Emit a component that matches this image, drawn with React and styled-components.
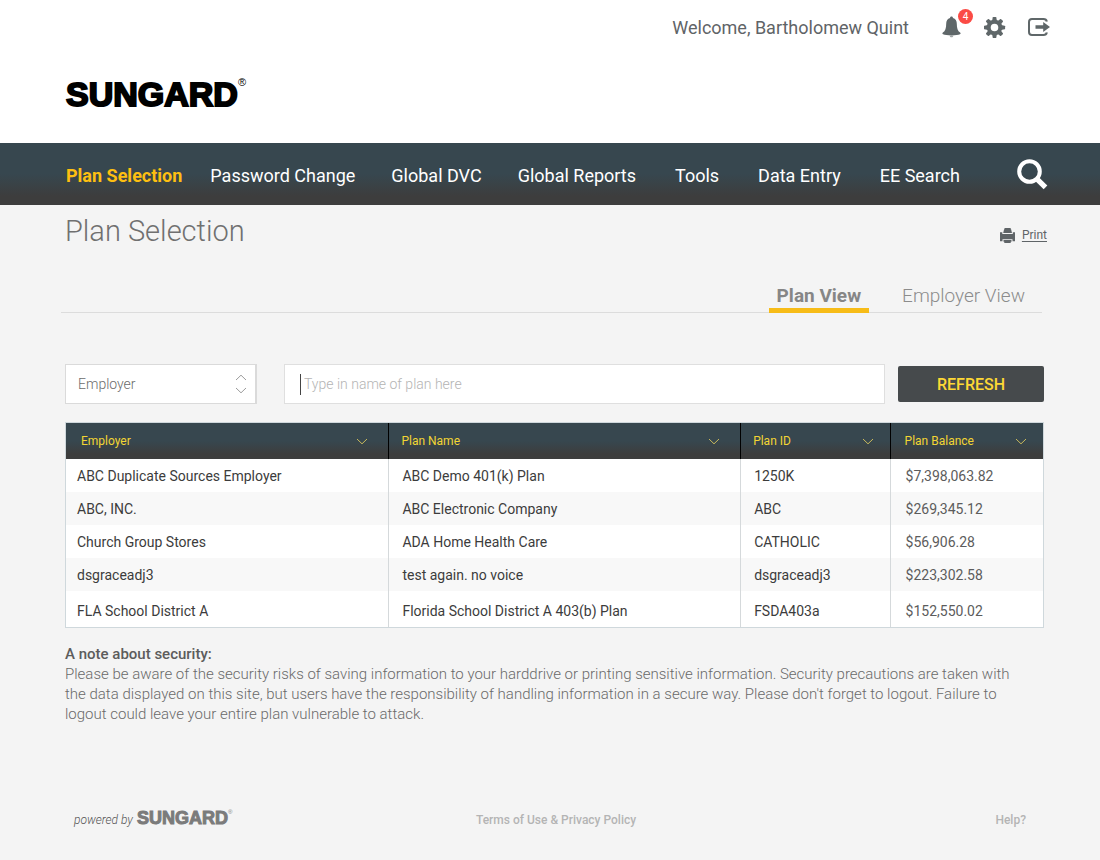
import React from "react";
import styled, { createGlobalStyle, css } from "styled-components";

const GlobalStyle = createGlobalStyle`
  *, *::before, *::after { box-sizing: border-box; }
  body {
    margin: 0;
    background: #f4f4f4;
    color: #3f3f3f;
    font-family: Roboto, "Liberation Sans", sans-serif;
    font-size: 14px;
  }
  button, input, select { font-family: inherit; }
`;

const barGradient = css`
  background: linear-gradient(#37474f 0%, #37474f 50%, #3d3d3d 86%, #3d3d3d 100%);
`;

const Page = styled.div`
  min-height: 100vh;
  display: flex;
  flex-direction: column;
`;

const Header = styled.header`
  background: #fff;
  padding: 12px 50px 28px 66px;
`;

const UserBar = styled.div`
  display: flex;
  justify-content: flex-end;
  align-items: center;
  height: 30px;
  margin-bottom: 32px;
`;

const Welcome = styled.span`
  font-size: 18px;
  color: #5f6467;
  margin-right: 33px;
`;

const IconButton = styled.button`
  position: relative;
  display: flex;
  padding: 0;
  border: 0;
  background: none;
  color: #5f6769;
  cursor: pointer;
  & + & { margin-left: 22px; }
`;

const Badge = styled.span`
  position: absolute;
  top: -7px;
  right: -11px;
  width: 15px;
  height: 15px;
  border-radius: 50%;
  background: #fb4b45;
  color: #fff;
  font-size: 10px;
  line-height: 15px;
  text-align: center;
`;

const Brand = styled.div`
  display: flex;
  align-items: flex-start;
  font-family: "Liberation Sans", sans-serif;
  font-weight: 700;
  font-size: ${(p) => (p.$small ? "18px" : "34px")};
  line-height: ${(p) => (p.$small ? "20px" : "41px")};
  color: ${(p) => (p.$small ? "#7b7b7b" : "#000")};
  -webkit-text-stroke: ${(p) => (p.$small ? "1px #7b7b7b" : "2px #000")};
`;

const Registered = styled.span`
  font-weight: 400;
  font-size: ${(p) => (p.$small ? "6px" : "11px")};
  line-height: ${(p) => (p.$small ? "8px" : "16px")};
  -webkit-text-stroke: 0;
`;

const NavBar = styled.nav`
  ${barGradient}
  display: flex;
  align-items: center;
  height: 62px;
  padding: 0 52px 0 66px;
`;

const NavGroup = styled.div`
  display: flex;
  gap: ${(p) => (p.$wide ? "39px" : "36px")};
  margin-left: ${(p) => (p.$wide ? "39px" : "0")};
  padding-top: 4px;
`;

const NavLink = styled.a`
  font-size: 18px;
  line-height: 24px;
  white-space: nowrap;
  text-decoration: none;
  color: ${(p) => (p.$active ? "#fdbf11" : "#fff")};
  font-weight: ${(p) => (p.$active ? 700 : 400)};
  margin-right: ${(p) => (p.$active ? "-8px" : "0")};
`;

const SearchButton = styled.button`
  display: flex;
  margin-left: auto;
  padding: 0;
  border: 0;
  background: none;
  color: #fff;
  cursor: pointer;
`;

const Main = styled.main`
  flex: 1;
  padding: 8px 56px 0 65px;
`;

const TitleRow = styled.div`
  display: flex;
  justify-content: space-between;
  align-items: flex-start;
  padding-right: 53px;
  margin-right: -56px;
`;

const Title = styled.h1`
  margin: 0;
  font-size: 29px;
  line-height: 36px;
  font-weight: 300;
  color: #707070;
`;

const PrintLink = styled.a`
  display: flex;
  align-items: center;
  gap: 7px;
  margin-top: 13px;
  font-size: 12px;
  line-height: 18px;
  color: #5f6467;
  text-underline-offset: 2px;
`;

const Tabs = styled.div`
  display: flex;
  justify-content: flex-end;
  gap: 25px;
  margin: 34px 2px 51px -4px;
  padding-right: 9px;
  border-bottom: 1px solid #dcdcdc;
`;

const Tab = styled.button`
  height: 30px;
  margin-bottom: -1px;
  padding: 0 8px;
  border: 0;
  border-bottom: 5px solid ${(p) => (p.$active ? "#f7bc18" : "transparent")};
  background: none;
  font-size: 19px;
  line-height: 24px;
  font-weight: ${(p) => (p.$active ? 700 : 300)};
  color: ${(p) => (p.$active ? "#868686" : "#8c8c8c")};
  cursor: pointer;
`;

const Filters = styled.form`
  display: flex;
  align-items: center;
  margin-bottom: 18px;
`;

const SelectWrap = styled.div`
  position: relative;
  width: 192px;
  svg {
    position: absolute;
    right: 10px;
    top: 10px;
    pointer-events: none;
  }
`;

const Select = styled.select`
  appearance: none;
  width: 100%;
  height: 40px;
  padding: 0 32px 0 12px;
  border: 1px solid #dadada;
  border-width: 1px 2px 1px 1px;
  border-radius: 0;
  background: #fff;
  color: #6c6c6c;
  font-size: 14px;
  font-weight: 300;
`;

const Field = styled.div`
  flex: 1;
  display: flex;
  align-items: center;
  height: 40px;
  margin: 0 13px 0 27px;
  padding-left: 15px;
  border: 1px solid #dfdfdf;
  background: #fff;
`;

const Caret = styled.span`
  width: 1px;
  height: 21px;
  background: #444;
`;

const Input = styled.input`
  flex: 1;
  min-width: 0;
  height: 100%;
  padding: 0 8px 0 3px;
  border: 0;
  outline: 0;
  background: none;
  font-size: 14px;
  font-weight: 300;
  color: #555;
  &::placeholder { color: #b4b4b4; opacity: 1; }
`;

const Refresh = styled.button`
  width: 146px;
  height: 36px;
  border: 0;
  border-radius: 2px;
  background: #464a4c;
  color: #fdd835;
  font-size: 16px;
  font-weight: 500;
  cursor: pointer;
`;

const Table = styled.table`
  width: 100%;
  table-layout: fixed;
  border-collapse: separate;
  border-spacing: 0;
  border: 1px solid #cfd8dc;
  background: #fff;
`;

const HeadRow = styled.tr`
  ${barGradient}
`;

const Th = styled.th`
  height: 36px;
  padding: 0 ${(p) => (p.$narrow ? "16px" : "20px")} 0 ${(p) => p.$indent + 2}px;
  border-left: ${(p) => (p.$first ? "0" : "1px solid #000")};
  text-align: left;
  font-size: 12px;
  font-weight: 400;
  color: #f3d533;
`;

const ThInner = styled.div`
  display: flex;
  align-items: center;
  justify-content: space-between;
`;

const Row = styled.tr`
  background: #fff;
  &:nth-child(even) { background: #f8f8f8; }
  td { height: 33px; }
  &:last-child td { height: 36px; padding-top: 3px; }
`;

const Td = styled.td`
  padding: 0 8px 0 ${(p) => p.$indent}px;
  border-left: ${(p) => (p.$first ? "0" : "1px solid #d5d9db")};
  font-size: 14px;
  color: ${(p) => (p.$amount ? "#5c5c5c" : "#3c3c3c")};
`;

const Note = styled.section`
  margin-top: 16px;
  padding-right: 26px;
  color: #6a6a6a;
`;

const NoteTitle = styled.h2`
  margin: 0;
  font-size: 15px;
  line-height: 20px;
  font-weight: 500;
  color: #5c5c5c;
`;

const NoteText = styled.p`
  margin: 0;
  font-size: 15px;
  line-height: 20px;
  font-weight: 300;
`;

const Footer = styled.footer`
  display: grid;
  grid-template-columns: 1fr auto 1fr;
  align-items: center;
  padding: 0 62px 30px 74px;
`;

const Powered = styled.div`
  display: flex;
  align-items: center;
  gap: 4px;
  font-size: 12px;
  font-style: italic;
  font-weight: 300;
  color: #555;
  ${Brand} { font-style: normal; margin-top: -4px; }
`;

const FooterLink = styled.a`
  padding: 0 12px;
  font-size: 12px;
  line-height: 20px;
  font-weight: 500;
  color: #b4b4b4;
  text-decoration: none;
  justify-self: ${(p) => (p.$end ? "end" : "center")};
`;

const BellIcon = () => (
  <svg width="20" height="22" viewBox="0 0 20 22" fill="currentColor" aria-hidden="true">
    <path d="M9.500 .5c-.9 0-1.500.6-1.500 1.500C5.500 2.700 4.200 4.900 4.200 7.700c0 4.600-.9 7.200-3.300 8.900-.8.600-.7 1.300.1 1.700 1.700.7 4.700 1.100 8.500 1.100s6.800-.4 8.500-1.100c.8-.4.900-1.100.1-1.700-2.400-1.700-3.300-4.300-3.300-8.900 0-2.800-1.300-5-3.800-5.700C11 1.100 10.400 .5 9.500 .5z" />
    <path d="M7.700 19.800h3.600c-.2 1-.8 1.500-1.800 1.500s-1.600-.5-1.800-1.500z" opacity=".6" />
  </svg>
);

const GearIcon = () => (
  <svg width="22" height="22" viewBox="0 0 22 22" aria-hidden="true">
    <circle cx="10.500" cy="11.500" r="5.800" fill="none" stroke="currentColor" strokeWidth="4" />
    {[0, 45, 90, 135, 180, 225, 270, 315].map((angle) => (
      <path
        key={angle}
        d="M8.100 5 8.700 1.400Q8.800 .9 9.300 .9h2.400Q12.200 .9 12.300 1.400L12.900 5z"
        fill="currentColor"
        transform={`rotate(${angle} 10.500 11.500)`}
      />
    ))}
  </svg>
);

const LogoutIcon = () => (
  <svg width="22" height="18" viewBox="0 0 22 18" fill="none" aria-hidden="true">
    <path d="M18.800 3.600V3.500Q18.300 1 15.500 1H4Q1 1 1 4v10q0 3 3 3h11.500q2.800 0 3.300-2.500v-.1" stroke="currentColor" strokeWidth="2" />
    <path d="M7.500 7.200h7.700V3.900L22 9l-6.800 5.100v-3.300H7.500z" fill="currentColor" />
  </svg>
);

const SearchIcon = () => (
  <svg width="31" height="31" viewBox="0 0 31 31" fill="none" stroke="currentColor" aria-hidden="true">
    <circle cx="12.500" cy="12.500" r="10.300" strokeWidth="4" />
    <path d="M19.800 19.800 28.500 28.300" strokeWidth="5.200" />
  </svg>
);

const PrintIcon = () => (
  <svg width="15" height="15" viewBox="0 0 15 15" fill="currentColor" aria-hidden="true">
    <path d="M4.500 0h6.200v1.200h.4L12 5H3.200l.9-3.800h.4z" />
    <path d="M0 4.200h2.300V6h10.500V4.200H15v9h-2.500v-2h-10v2H0z" />
    <path d="M3.500 12h8v1.800h-.8V15H4.300v-1.200h-.8z" />
  </svg>
);

const ChevronDown = () => (
  <svg width="12" height="7" viewBox="0 0 12 7" fill="none" stroke="#c9b95c" aria-hidden="true">
    <path d="M1 1l5 4.800L11 1" />
  </svg>
);

const StepperIcon = () => (
  <svg width="12" height="20" viewBox="0 0 12 20" fill="none" stroke="#9c9c9c" aria-hidden="true">
    <path d="M1 6l5-4.800L11 6M1 14l5 4.800L11 14" />
  </svg>
);

const Sungard = ({ small }) => (
  <Brand $small={small}>
    SUNGARD<Registered $small={small}>®</Registered>
  </Brand>
);

const primaryLinks = ["Plan Selection", "Password Change", "Global DVC", "Global Reports"];
const secondaryLinks = ["Tools", "Data Entry", "EE Search"];

const columns = [
  { label: "Employer", width: "33%", indent: 11, headIndent: 13 },
  { label: "Plan Name", width: "36%", indent: 13, headIndent: 10 },
  { label: "Plan ID", width: "15.3%", indent: 13, headIndent: 10, narrow: true },
  { label: "Plan Balance", width: "15.7%", indent: 15, headIndent: 12, narrow: true },
];

const plans = [
  ["ABC Duplicate Sources Employer", "ABC Demo 401(k) Plan", "1250K", "$7,398,063.82"],
  ["ABC, INC.", "ABC Electronic Company", "ABC", "$269,345.12"],
  ["Church Group Stores", "ADA Home Health Care", "CATHOLIC", "$56,906.28"],
  ["dsgraceadj3", "test again. no voice", "dsgraceadj3", "$223,302.58"],
  ["FLA School District A", "Florida School District A 403(b) Plan", "FSDA403a", "$152,550.02"],
];

export default function App() {
  return (
    <Page>
      <GlobalStyle />
      <Header>
        <UserBar>
          <Welcome>Welcome, Bartholomew Quint</Welcome>
          <IconButton type="button" aria-label="Notifications">
            <BellIcon />
            <Badge>4</Badge>
          </IconButton>
          <IconButton type="button" aria-label="Settings"><GearIcon /></IconButton>
          <IconButton type="button" aria-label="Log out"><LogoutIcon /></IconButton>
        </UserBar>
        <Sungard />
      </Header>

      <NavBar>
        <NavGroup>
          {primaryLinks.map((label, i) => (
            <NavLink key={label} href="#" $active={i === 0}>{label}</NavLink>
          ))}
        </NavGroup>
        <NavGroup $wide>
          {secondaryLinks.map((label) => (
            <NavLink key={label} href="#">{label}</NavLink>
          ))}
        </NavGroup>
        <SearchButton type="button" aria-label="Search"><SearchIcon /></SearchButton>
      </NavBar>

      <Main>
        <TitleRow>
          <Title>Plan Selection</Title>
          <PrintLink href="#"><PrintIcon />Print</PrintLink>
        </TitleRow>

        <Tabs role="tablist">
          <Tab type="button" role="tab" aria-selected="true" $active>Plan View</Tab>
          <Tab type="button" role="tab" aria-selected="false">Employer View</Tab>
        </Tabs>

        <Filters onSubmit={(e) => e.preventDefault()}>
          <SelectWrap>
            <Select aria-label="Search by" defaultValue="Employer">
              <option>Employer</option>
            </Select>
            <StepperIcon />
          </SelectWrap>
          <Field>
            <Caret />
            <Input type="text" aria-label="Plan name" placeholder="Type in name of plan here" />
          </Field>
          <Refresh type="submit">REFRESH</Refresh>
        </Filters>

        <Table>
          <colgroup>
            {columns.map((c) => <col key={c.label} width={c.width} />)}
          </colgroup>
          <thead>
            <HeadRow>
              {columns.map((c, i) => (
                <Th key={c.label} scope="col" $first={i === 0} $indent={c.headIndent} $narrow={c.narrow}>
                  <ThInner>{c.label}<ChevronDown /></ThInner>
                </Th>
              ))}
            </HeadRow>
          </thead>
          <tbody>
            {plans.map((plan) => (
              <Row key={plan[0]}>
                {plan.map((value, i) => (
                  <Td key={i} $first={i === 0} $indent={columns[i].indent} $amount={i === 3}>{value}</Td>
                ))}
              </Row>
            ))}
          </tbody>
        </Table>

        <Note>
          <NoteTitle>A note about security:</NoteTitle>
          <NoteText>
            Please be aware of the security risks of saving information to your harddrive or printing
            sensitive information. Security precautions are taken with the data displayed on this site,
            but users have the responsibility of handling information in a secure way. Please don't
            forget to logout. Failure to logout could leave your entire plan vulnerable to attack.
          </NoteText>
        </Note>
      </Main>

      <Footer>
        <Powered>powered by <Sungard small /></Powered>
        <FooterLink href="#">Terms of Use &amp; Privacy Policy</FooterLink>
        <FooterLink href="#" $end>Help?</FooterLink>
      </Footer>
    </Page>
  );
}
